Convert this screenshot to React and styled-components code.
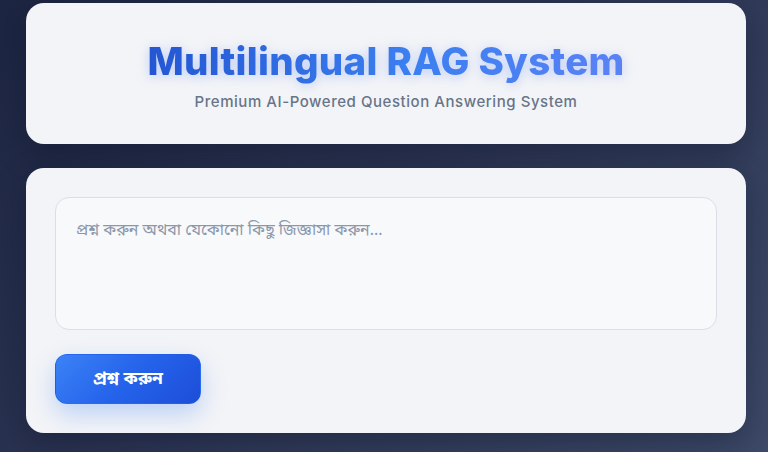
import React from "react";
import styled, { createGlobalStyle } from "styled-components";

const Global = createGlobalStyle`
  html, body { margin: 0; padding: 0; height: 100%; }
  body {
    font-family: Inter, "Noto Sans", "Noto Sans Bengali", sans-serif;
    background: linear-gradient(135deg, #1c2541 0%, #2b3452 45%, #3d4a68 100%);
    min-height: 452px;
    overflow: hidden;
  }
`;

const Page = styled.main`
  display: flex;
  flex-direction: column;
  gap: 24px;
  padding: 3px 22px 0 26px;
`;

const Card = styled.section`
  background: #f3f4f7;
  border-radius: 18px;
  box-shadow: 0 10px 30px rgba(10, 15, 35, 0.35);
`;

const Header = styled(Card)`
  height: 141px;
  box-sizing: border-box;
  display: flex;
  flex-direction: column;
  align-items: center;
  padding-top: 35px;
`;

const Title = styled.h1`
  margin: 0;
  font-family: Inter, sans-serif;
  font-weight: 800;
  font-size: 38.5px;
  line-height: 46px;
  letter-spacing: 0.3px;
  background: linear-gradient(90deg, #2456d3 0%, #3b7ff0 55%, #5a82f5 100%);
  -webkit-background-clip: text;
  background-clip: text;
  color: transparent;
  filter: drop-shadow(0 2px 6px rgba(59, 111, 240, 0.3));
`;

const Subtitle = styled.p`
  margin: 9px 0 0;
  font-family: Inter, sans-serif;
  font-size: 15px;
  line-height: 18px;
  font-weight: 500;
  color: #687589;
  letter-spacing: 0.55px;
`;

const Body = styled(Card)`
  padding: 29px;
  display: flex;
  flex-direction: column;
  gap: 24px;
  align-items: flex-start;
`;

const Input = styled.textarea`
  width: 100%;
  height: 133px;
  box-sizing: border-box;
  resize: none;
  border: 1px solid #d9dee8;
  border-radius: 14px;
  background: #f8f9fb;
  padding: 22px 20px;
  font-family: "Noto Sans Bengali", "Noto Sans", sans-serif;
  font-size: 16px;
  outline: none;
  color: #334155;
  &::placeholder { color: #8b97aa; }
`;

const Button = styled.button`
  width: 146px;
  height: 50px;
  border: 1px solid rgba(37, 99, 235, 0.6);
  border-radius: 12px;
  background: linear-gradient(135deg, #3b82f6 0%, #2563eb 50%, #1d4ed8 100%);
  color: #ffffff;
  font-family: "Noto Sans Bengali", "Noto Sans", sans-serif;
  font-weight: 700;
  font-size: 17.5px;
  box-shadow: 0 10px 25px rgba(59, 130, 246, 0.3);
  cursor: pointer;
`;

export default function App() {
  return (
    <>
      <Global />
      <Page>
        <Header>
          <Title>Multilingual RAG System</Title>
          <Subtitle>Premium AI-Powered Question Answering System</Subtitle>
        </Header>
        <Body>
          <Input placeholder="প্রশ্ন করুন অথবা যেকোনো কিছু জিজ্ঞাসা করুন..." />
          <Button>প্রশ্ন করুন</Button>
        </Body>
      </Page>
    </>
  );
}
